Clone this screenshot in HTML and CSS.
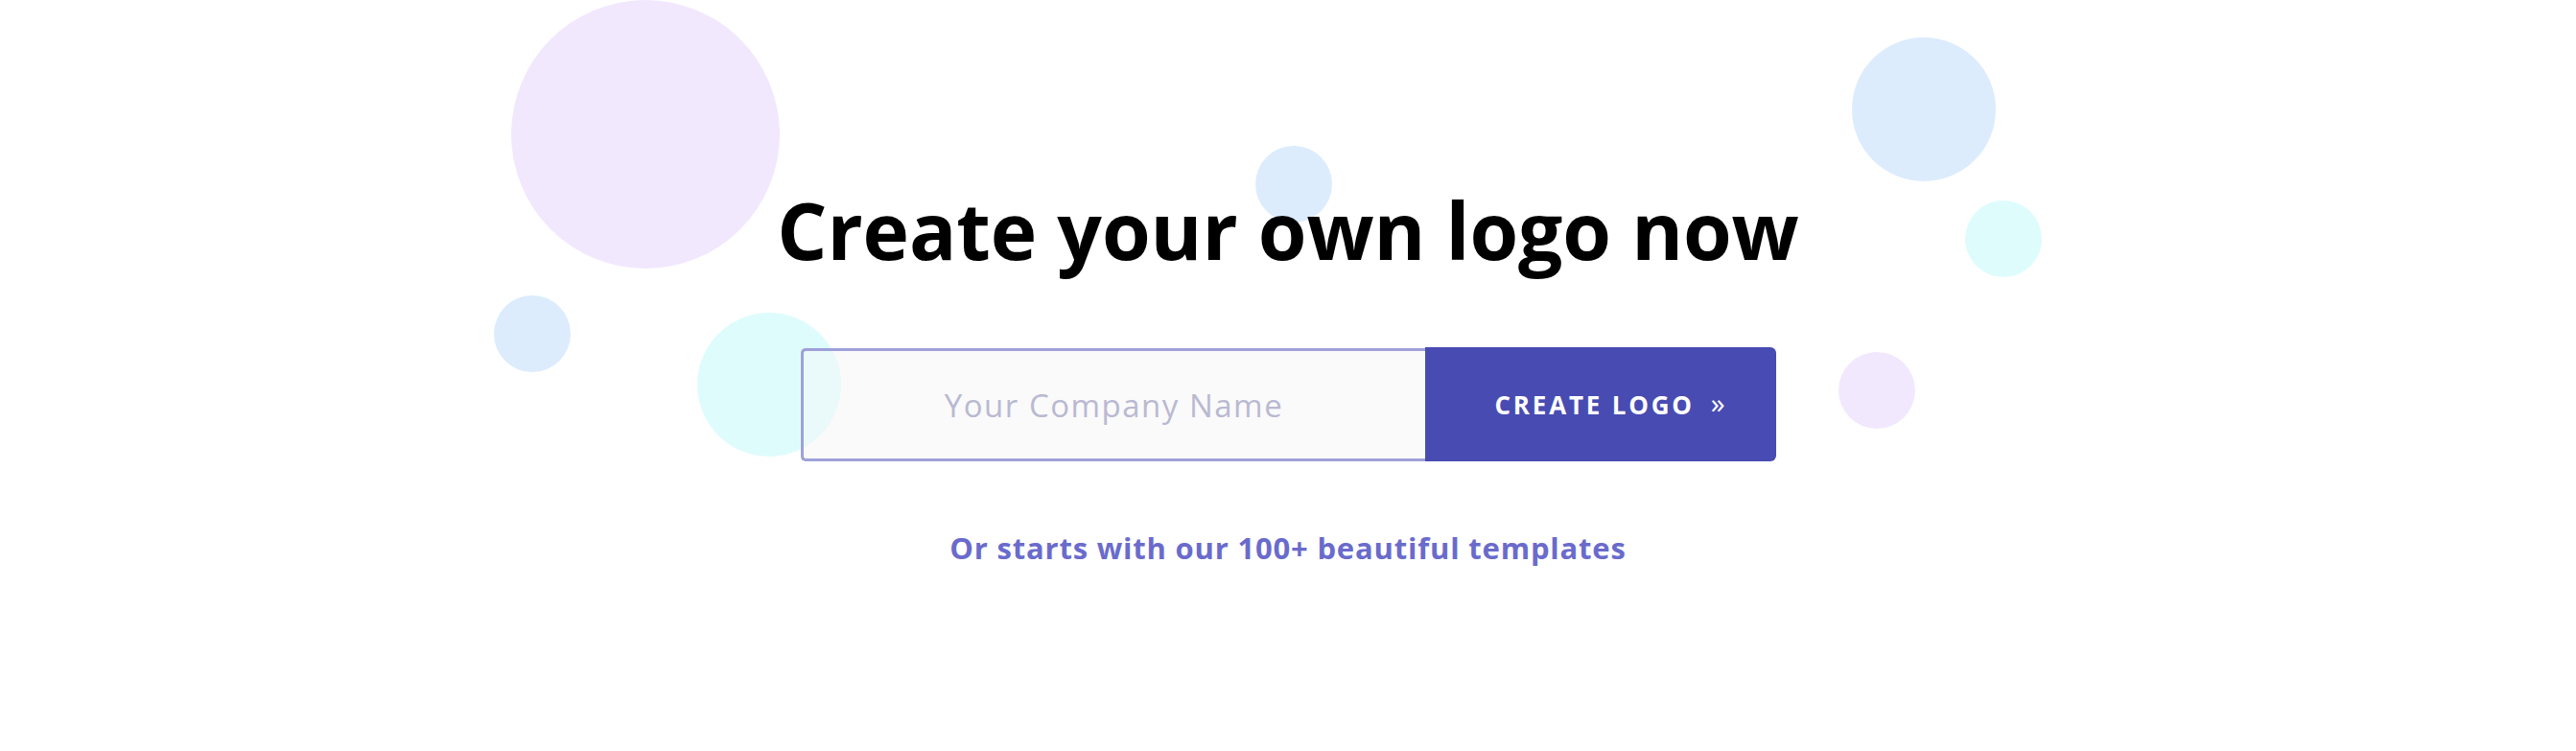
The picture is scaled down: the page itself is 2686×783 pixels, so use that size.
FILE: index.html
```html
<!DOCTYPE html>
<html lang="en">
<head>
    <meta charset="UTF-8">
    <meta name="viewport" content="width=device-width, initial-scale=1.0">
    <title>Create your own logo</title>
    <link rel="stylesheet" href="styles.css">
</head>
<body>
    <section class="hero">
        <!-- decorative bubbles -->
        <div class="bubble bubble-purple bubble-xl" style="left: 533px; top: 0px;"></div>
        <div class="bubble bubble-blue bubble-sm" style="left: 515px; top: 308px;"></div>
        <div class="bubble bubble-cyan bubble-md" style="left: 727px; top: 326px;"></div>
        <div class="bubble bubble-blue bubble-sm" style="left: 1309px; top: 152px;"></div>
        <div class="bubble bubble-blue bubble-md" style="left: 1931px; top: 39px;"></div>
        <div class="bubble bubble-cyan bubble-sm" style="left: 2049px; top: 209px;"></div>
        <div class="bubble bubble-purple bubble-sm" style="left: 1917px; top: 367px;"></div>

        <h1 class="title">Create your own logo now</h1>

        <form class="logo-form" onsubmit="return false;">
            <input class="company-input" type="text" placeholder="Your Company Name">
            <button class="create-btn" type="submit">
                <span>CREATE LOGO</span>
                <span class="chevron">&raquo;</span>
            </button>
        </form>

        <a href="#" class="templates-link">Or starts with our 100+ beautiful templates</a>
    </section>
</body>
</html>
```

FILE: styles.css
```css
:root {
    --text-color: #000;
    --accent: #484bb2;
    --accent-soft: #6a6bcc;
    --border-soft: #9ea1d8;
    --placeholder: #b9b9d2;
    --purple: #f2e8fe;
    --blue: #dcecfd;
    --cyan: #dffcfd;
}

body {
    margin: 0;
    font-family: "Open Sans", "Noto Sans", sans-serif;
    background: #fff;
    color: var(--text-color);
}

.hero {
    position: relative;
    min-height: 783px;
    display: flex;
    flex-direction: column;
    align-items: center;
    padding-top: 198px;
    box-sizing: border-box;
    overflow: hidden;
}

.bubble {
    position: absolute;
    border-radius: 50%;
    z-index: 0;
}

.bubble-xl { width: 280px; height: 280px; }
.bubble-md { width: 150px; height: 150px; }
.bubble-sm { width: 80px; height: 80px; }

.bubble-purple { background: var(--purple); }
.bubble-blue { background: var(--blue); }
.bubble-cyan { background: var(--cyan); }

.title {
    position: relative;
    z-index: 1;
    margin: 0;
    font-size: 82px;
    line-height: 1;
    font-weight: 700;
    letter-spacing: -0.1px;
}

.logo-form {
    position: relative;
    z-index: 1;
    display: flex;
    margin-top: 82px;
    height: 119px;
}

.company-input {
    width: 651px;
    box-sizing: border-box;
    border: 3px solid var(--border-soft);
    border-right: none;
    border-radius: 5px 0 0 5px;
    background: rgba(245, 245, 245, 0.5);
    margin: 1px 0 0;
    font-family: inherit;
    font-size: 33px;
    letter-spacing: 1.5px;
    text-align: center;
    color: #333;
    outline: none;
}

.company-input::placeholder {
    color: var(--placeholder);
}

.create-btn {
    width: 366px;
    box-sizing: border-box;
    border: none;
    border-radius: 0 6px 6px 0;
    background: var(--accent);
    color: #fff;
    font-family: inherit;
    font-weight: 700;
    font-size: 26px;
    letter-spacing: 2.8px;
    display: flex;
    align-items: center;
    gap: 17px;
    padding: 0 0 0 73px;
    cursor: pointer;
}

.chevron {
    font-size: 30px;
    font-weight: 400;
    letter-spacing: 0;
    line-height: 1;
    margin-top: -4px;
}

.templates-link {
    position: relative;
    z-index: 1;
    margin-top: 75px;
    font-size: 31px;
    letter-spacing: 0.8px;
    line-height: 1;
    font-weight: 700;
    color: var(--accent-soft);
    text-decoration: none;
}
```
